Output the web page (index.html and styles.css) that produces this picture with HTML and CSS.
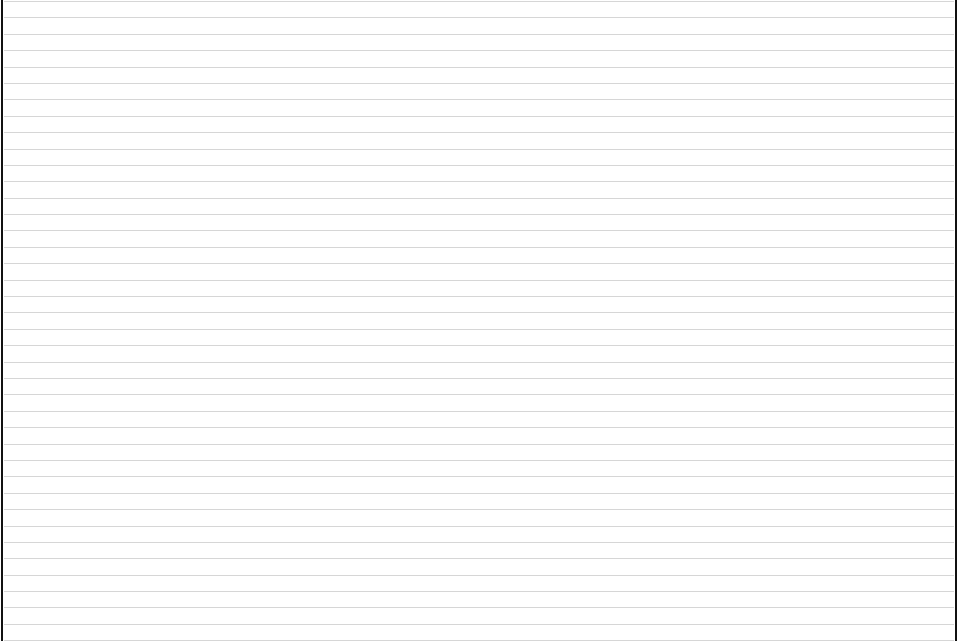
FILE: index.html
```html
<!DOCTYPE html>
<html>
<head>
<meta charset="utf-8">
<link rel="stylesheet" href="styles.css">
</head>
<body>
<div class="sheet">
<div class="row"></div><div class="row"></div><div class="row"></div><div class="row"></div><div class="row"></div>
<div class="row"></div><div class="row"></div><div class="row"></div><div class="row"></div><div class="row"></div>
<div class="row"></div><div class="row"></div><div class="row"></div><div class="row"></div><div class="row"></div>
<div class="row"></div><div class="row"></div><div class="row"></div><div class="row"></div><div class="row"></div>
<div class="row"></div><div class="row"></div><div class="row"></div><div class="row"></div><div class="row"></div>
<div class="row"></div><div class="row"></div><div class="row"></div><div class="row"></div><div class="row"></div>
<div class="row"></div><div class="row"></div><div class="row"></div><div class="row"></div><div class="row"></div>
<div class="row"></div><div class="row"></div><div class="row"></div><div class="row last"></div>
</div>
</body>
</html>
```
FILE: styles.css
```css
html, body {
  margin: 0;
  padding: 0;
  background: #ffffff;
  height: 641px;
  overflow: hidden;
}
.sheet {
  box-sizing: border-box;
  height: 641px;
  margin: 0 3px 0 1px;
  border-left: 2px solid #111111;
  border-right: 2px solid #111111;
  padding: 1px 1px 0 1px;
  display: flex;
  flex-direction: column;
}
.row {
  flex: 1;
  border-top: 1px solid #d6d6d6;
}
.row.last {
  border-bottom: 1px solid #d6d6d6;
}
```
